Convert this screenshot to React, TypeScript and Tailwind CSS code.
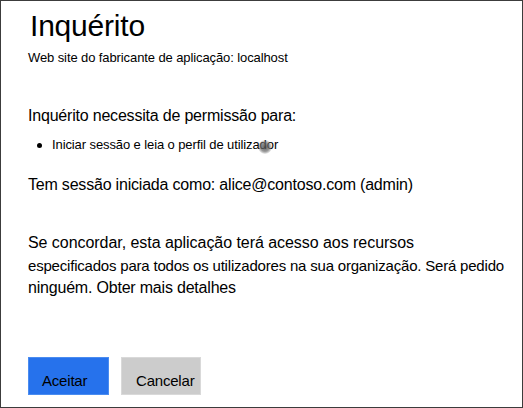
import React from "react";

export default function App() {
  return (
    <div
      className="relative w-[523px] h-[408px] bg-white border border-[#3c3c3c] text-black overflow-hidden"
      style={{ fontFamily: '"Liberation Sans", Arial, sans-serif' }}
    >
      <div className="flex flex-col pl-[27px] pt-[7px]">
        <h1 className="pl-[2px] text-[30px] leading-[36px] font-normal tracking-[-0.2px]">Inquérito</h1>
        <p className="mt-[5px] text-[13px] leading-[18px] tracking-[-0.1px]">
          Web site do fabricante de aplicação: localhost
        </p>
        <p className="mt-[38px] text-[16px] leading-[22px] tracking-[-0.2px]">
          Inquérito necessita de permissão para:
        </p>
        <ul className="mt-[9px] pl-[9px]">
          <li className="flex items-center text-[13px] leading-[18px] tracking-[-0.1px]">
            <span className="w-[5px] h-[5px] rounded-full bg-black mr-[10px]" />
            Iniciar sessão e leia o perfil de utilizador
          </li>
        </ul>
        <p className="mt-[20px] text-[16px] leading-[22px] tracking-[-0.2px]">
          Tem sessão iniciada como: alice@contoso.com (admin)
        </p>
        <div className="mt-[36px] flex flex-col">
          <span className="text-[16px] leading-[22.5px] tracking-[-0.05px]">
            Se concordar, esta aplicação terá acesso aos recursos
          </span>
          <span className="text-[15px] leading-[22.5px] tracking-[-0.2px]">
            especificados para todos os utilizadores na sua organização. Será pedido
          </span>
          <span className="text-[16px] leading-[22.5px] tracking-[-0.2px]">
            ninguém. Obter mais detalhes
          </span>
        </div>
      </div>
      <div className="absolute left-[27px] top-[356px] flex gap-[12px]">
        <button className="w-[81px] h-[38px] bg-[#2672ec] border border-[#4a8cf0] text-left pl-[13px] pt-[10px] text-[15px] leading-[20px] tracking-[-0.2px] text-black">
          Aceitar
        </button>
        <button className="w-[80px] h-[38px] bg-[#cccccc] border border-[#d9d9d9] text-left pl-[14px] pt-[10px] text-[15px] leading-[20px] tracking-[-0.2px] text-black">
          Cancelar
        </button>
      </div>
      <div className="absolute left-[257px] top-[139px] w-[14px] h-[14px] rounded-full bg-[radial-gradient(circle,rgba(70,70,70,0.85)_0%,rgba(110,110,110,0.7)_45%,rgba(160,160,160,0)_75%)]" />
    </div>
  );
}
